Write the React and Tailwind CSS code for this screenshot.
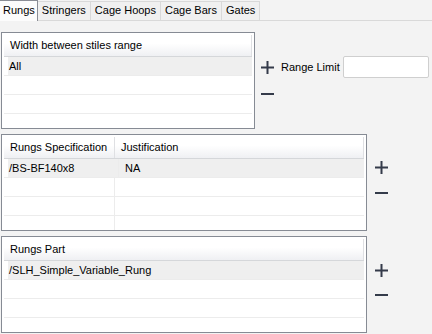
import React from 'react'

const font = { fontFamily: '"Liberation Sans", Arial, sans-serif' }

function Plus() {
  return (
    <svg width="13" height="13" viewBox="0 0 13 13" className="block">
      <rect x="0" y="5.5" width="13" height="2" fill="#343b4a" />
      <rect x="5.5" y="0" width="2" height="13" fill="#343b4a" />
    </svg>
  )
}

function Minus() {
  return (
    <svg width="13" height="2" viewBox="0 0 13 2" className="block">
      <rect x="0" y="0" width="13" height="2" fill="#343b4a" />
    </svg>
  )
}

function Tabs() {
  const tabs = ['Stringers', 'Cage Hoops', 'Cage Bars', 'Gates']
  return (
    <div className="flex h-[21px] items-end border-b border-[#d9d9d9]">
      <div className="relative z-10 -mb-px flex h-[21px] items-center border-r border-t border-[#8a8d95] bg-[#fcfcfc] pl-[3px] pr-[2px] pb-[2px]">
        Rungs
      </div>
      {tabs.map(t => (
        <div key={t} className="flex h-[19px] items-center border-r border-t border-[#d9d9d9] bg-[#f0f0f0] px-[4px] pb-[1px]">
          {t}
        </div>
      ))}
    </div>
  )
}

function Grid({ cols, rows, width }) {
  return (
    <div className={`h-[97px] shrink-0 overflow-hidden border border-[#868b94] bg-white p-[2px] ${width}`}>
      <div className="flex h-[22px] border-b border-[#d5d7da] bg-linear-to-b from-white from-40% to-[#eff0f3]">
        {cols.map((c, i) => (
          <div key={i} className={`flex items-center border-r border-[#dfe0e3] pl-[6px] ${c.w}`}>{c.label}</div>
        ))}
      </div>
      {[0, 1, 2, 3].map(r => (
        <div key={r} className="flex h-[19px] border-b border-[#ececec]">
          {cols.map((c, i) => (
            <div
              key={i}
              className={`flex items-center ${c.w} ${i < cols.length - 1 ? 'border-r border-[#ececec]' : ''} ${r === 0 ? 'bg-[#efefef]' : ''} ${r === 0 && i === 0 ? 'ml-[4px] pl-[1px]' : 'pl-[6px]'}`}
            >
              {r === 0 ? rows[i] : ''}
            </div>
          ))}
        </div>
      ))}
    </div>
  )
}

export default function App() {
  return (
    <div className="h-[334px] w-[432px] overflow-hidden bg-[#f3f3f3] text-[11px] text-black" style={font}>
      <Tabs />
      <div className="flex flex-col gap-[5px] pl-[1px] pt-[11px]">
        <div className="flex items-start">
          <Grid width="w-[254px]" cols={[{ label: 'Width between stiles range', w: 'flex-1' }]} rows={['All']} />
          <div className="ml-[6px] mt-[29px] flex shrink-0 flex-col gap-[19px]">
            <Plus />
            <Minus />
          </div>
          <div className="ml-[7px] mt-[24px] flex shrink-0 items-center gap-[3px] whitespace-nowrap">
            <span>Range Limit</span>
            <div className="h-[22px] w-[86px] shrink-0 rounded-[2px] border border-[#cfcfcf] bg-white" />
          </div>
        </div>
        <div className="flex items-start">
          <Grid
            width="w-[366px]"
            cols={[{ label: 'Rungs Specification', w: 'w-[111px]' }, { label: 'Justification', w: 'flex-1' }]}
            rows={['/BS-BF140x8', 'NA']}
          />
          <div className="ml-[8px] mt-[27px] flex flex-col gap-[18px]">
            <Plus />
            <Minus />
          </div>
        </div>
        <div className="flex items-start">
          <Grid width="w-[366px]" cols={[{ label: 'Rungs Part', w: 'flex-1' }]} rows={['/SLH_Simple_Variable_Rung']} />
          <div className="ml-[8px] mt-[28px] flex flex-col gap-[17px]">
            <Plus />
            <Minus />
          </div>
        </div>
      </div>
    </div>
  )
}
